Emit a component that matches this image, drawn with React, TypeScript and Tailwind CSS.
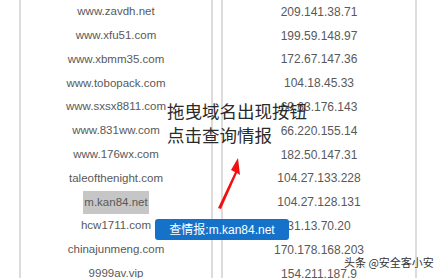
import React from 'react';

const rows = [
  { domain: 'www.zavdh.net', ip: '209.141.38.71' },
  { domain: 'www.xfu51.com', ip: '199.59.148.97' },
  { domain: 'www.xbmm35.com', ip: '172.67.147.36' },
  { domain: 'www.tobopack.com', ip: '104.18.45.33' },
  { domain: 'www.sxsx8811.com', ip: '69.63.176.143' },
  { domain: 'www.831ww.com', ip: '66.220.155.14' },
  { domain: 'www.176wx.com', ip: '182.50.147.31' },
  { domain: 'taleofthenight.com', ip: '104.27.133.228' },
  { domain: 'm.kan84.net', ip: '104.27.128.131', selected: true },
  { domain: 'hcw1711.com', ip: '31.13.70.20' },
  { domain: 'chinajunmeng.com', ip: '170.178.168.203' },
  { domain: '9999av.vip', ip: '154.211.187.9' },
];

export default function App() {
  return (
    <div
      className="relative w-[445px] h-[278px] overflow-hidden bg-white"
      style={{ fontFamily: '"Liberation Sans", Arial, sans-serif' }}
    >
      {/* table */}
      <div className="flex pl-[19px]">
        <div className="w-[194px] border-x-2 border-[#dcdcdc]">
          {rows.map((r) => (
            <div key={r.domain} className="h-[23.8px] flex items-center justify-center">
              <span
                className={`text-[11.5px] text-[#595959] px-[1px] ${
                  r.selected ? 'bg-[#c6c6c6] h-[23px] flex items-center' : ''
                }`}
              >
                {r.domain}
              </span>
            </div>
          ))}
        </div>
        <div className="w-[8px]" />
        <div className="w-[196px] border-x-2 border-[#dcdcdc]">
          {rows.map((r) => (
            <div key={r.ip} className="h-[23.8px] flex items-center justify-center">
              <span className="text-[12px] text-[#595959]">{r.ip}</span>
            </div>
          ))}
        </div>
      </div>

      {/* annotation */}
      <div
        className="absolute left-[167px] top-[99px] text-[17.5px] leading-[24px] text-[#2a2a2a] whitespace-nowrap"
        style={{ fontFamily: '"Noto Sans CJK SC", sans-serif' }}
      >
        <div>拖曳域名出现按钮</div>
        <div>点击查询情报</div>
      </div>

      {/* red arrow */}
      <svg className="absolute left-[210px] top-[150px]" width="40" height="62" viewBox="0 0 40 62">
        <path d="M8 58 L25 22 L21 20 L28 8 L30 25 L27 23 L11 59 Z" fill="#f01010" />
      </svg>

      {/* query button */}
      <div className="absolute left-[155px] top-[219px] w-[134px] h-[21px] rounded-[3px] bg-[#1672c9] flex items-center justify-center">
        <span
          className="text-[12px] text-white"
          style={{ fontFamily: '"Liberation Sans", "Noto Sans CJK SC", sans-serif' }}
        >
          查情报:m.kan84.net
        </span>
      </div>

      {/* watermark */}
      <div
        className="absolute left-[344px] top-[254px] text-[11px] text-[#333] whitespace-nowrap"
        style={{
          fontFamily: '"Noto Sans CJK SC", sans-serif',
          textShadow: '0 0 2px #fff, 0 0 2px #fff',
        }}
      >
        头条 @安全客小安
      </div>
    </div>
  );
}
